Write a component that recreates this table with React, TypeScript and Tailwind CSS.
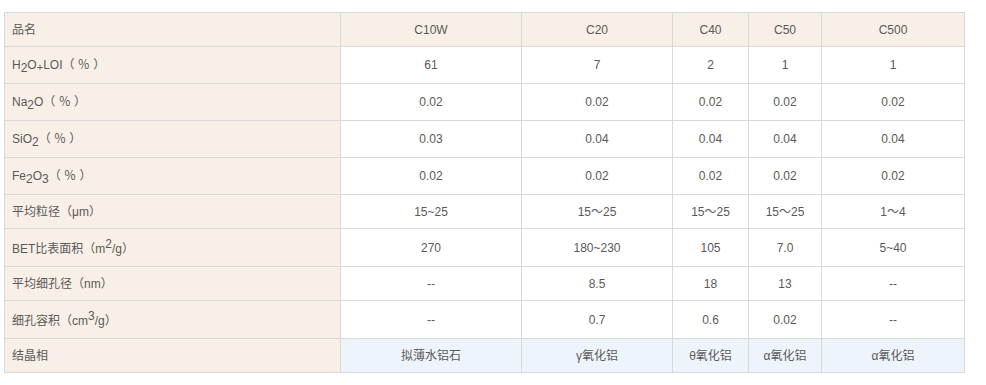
const cols = ['C10W', 'C20', 'C40', 'C50', 'C500'];

type Row = { label: React.ReactNode; values: string[]; h: string };

// inline sub/sup helpers (preflight sub/sup offsets are too big here)
const Sub = ({ children }: { children: React.ReactNode }) => (
  <span className="align-[-3px] text-[12px] leading-none">{children}</span>
);
const Sup = ({ children }: { children: React.ReactNode }) => (
  <span className="align-[5px] text-[12px] leading-none">{children}</span>
);

const rows: Row[] = [
  {
    label: (
      <>
        H<Sub>2</Sub>O<span className="align-[-2px] text-[11px] leading-none">+</span>LOI（ ％ ）
      </>
    ),
    values: ['61', '7', '2', '1', '1'],
    h: 'h-[37px]',
  },
  {
    label: (
      <>
        Na<Sub>2</Sub>O（ ％ ）
      </>
    ),
    values: ['0.02', '0.02', '0.02', '0.02', '0.02'],
    h: 'h-[37px]',
  },
  {
    label: (
      <>
        SiO<Sub>2</Sub>（ ％ ）
      </>
    ),
    values: ['0.03', '0.04', '0.04', '0.04', '0.04'],
    h: 'h-[37px]',
  },
  {
    label: (
      <>
        Fe<Sub>2</Sub>O<Sub>3</Sub>（ ％ ）
      </>
    ),
    values: ['0.02', '0.02', '0.02', '0.02', '0.02'],
    h: 'h-[37px]',
  },
  {
    label: '平均粒径（μm）',
    values: ['15~25', '15～25', '15～25', '15～25', '1～4'],
    h: 'h-[34px]',
  },
  {
    label: (
      <>
        BET比表面积（m<Sup>2</Sup>/g）
      </>
    ),
    values: ['270', '180~230', '105', '7.0', '5~40'],
    h: 'h-[38px]',
  },
  {
    label: '平均细孔径（nm）',
    values: ['--', '8.5', '18', '13', '--'],
    h: 'h-[34px]',
  },
  {
    label: (
      <>
        细孔容积（cm<Sup>3</Sup>/g）
      </>
    ),
    values: ['--', '0.7', '0.6', '0.02', '--'],
    h: 'h-[38px]',
  },
];

const phases = ['拟薄水铝石', 'γ氧化铝', 'θ氧化铝', 'α氧化铝', 'α氧化铝'];

export default function App() {
  return (
    <div className="w-[986px] h-[385px] bg-white pt-[12px] pl-[4px] font-['Liberation_Sans','Noto_Sans_CJK_SC',sans-serif] text-[12px] text-[#5a5a5a]">
      <table className="w-[960px] table-fixed border-collapse">
        <colgroup>
          <col className="w-[336px]" />
          <col className="w-[181px]" />
          <col className="w-[151px]" />
          <col className="w-[76px]" />
          <col className="w-[73px]" />
          <col className="w-[143px]" />
        </colgroup>
        <tbody>
          {/* header */}
          <tr className="h-[34px] bg-[#f8efe7]">
            <td className="border border-[#d9d9d9] pl-[7px] text-left">品名</td>
            {cols.map((c) => (
              <td key={c} className="border border-[#d9d9d9] text-center">
                {c}
              </td>
            ))}
          </tr>

          {rows.map((r, i) => (
            <tr key={i} className={r.h}>
              <td className="border border-[#d9d9d9] bg-[#f8efe7] pl-[7px] text-left whitespace-nowrap">{r.label}</td>
              {r.values.map((v, j) => (
                <td key={j} className="border border-[#d9d9d9] text-center">
                  {v}
                </td>
              ))}
            </tr>
          ))}

          {/* crystal phase */}
          <tr className="h-[34px]">
            <td className="border border-[#d9d9d9] bg-[#f8efe7] pl-[7px] text-left">结晶相</td>
            {phases.map((p, j) => (
              <td key={j} className="border border-[#d9d9d9] bg-[#eef4fb] text-center">
                {p}
              </td>
            ))}
          </tr>
        </tbody>
      </table>
    </div>
  );
}
